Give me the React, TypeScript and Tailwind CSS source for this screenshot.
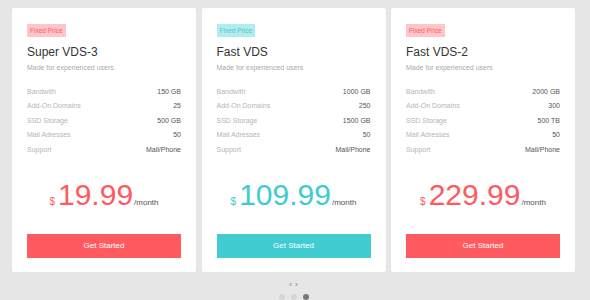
import * as React from "react";

type Plan = {
  name: string;
  color: "red" | "teal";
  specs: [string, string][];
  price: string;
};

const plans: Plan[] = [
  {
    name: "Super VDS-3",
    color: "red",
    specs: [
      ["Bandwith", "150 GB"],
      ["Add-On Domains", "25"],
      ["SSD Storage", "500 GB"],
      ["Mail Adresses", "50"],
      ["Support", "Mail/Phone"],
    ],
    price: "19.99",
  },
  {
    name: "Fast VDS",
    color: "teal",
    specs: [
      ["Bandwith", "1000 GB"],
      ["Add-On Domains", "250"],
      ["SSD Storage", "1500 GB"],
      ["Mail Adresses", "50"],
      ["Support", "Mail/Phone"],
    ],
    price: "109.99",
  },
  {
    name: "Fast VDS-2",
    color: "red",
    specs: [
      ["Bandwith", "2000 GB"],
      ["Add-On Domains", "300"],
      ["SSD Storage", "500 TB"],
      ["Mail Adresses", "50"],
      ["Support", "Mail/Phone"],
    ],
    price: "229.99",
  },
];

const colorStyles = {
  red: {
    badge: "bg-[#ffc5c8] text-[#ff5a5f]",
    text: "text-[#ff5a5f]",
    button: "bg-[#ff5a5f]",
  },
  teal: {
    badge: "bg-[#b3ecee] text-[#3fcbd0]",
    text: "text-[#3fcbd0]",
    button: "bg-[#40ccd1]",
  },
};

function PlanCard({ plan }: { plan: Plan }) {
  const c = colorStyles[plan.color];
  return (
    <div className="flex h-[264px] w-[184px] flex-col rounded-[2px] bg-white px-[15px] pt-[16px]">
      <div className="flex">
        <span className={`h-[13px] px-[3px] text-[6.5px] leading-[13px] ${c.badge}`}>
          Fixed Price
        </span>
      </div>
      <h2 className="mt-[8px] text-[12px] leading-[14px] text-[#333]">
        {plan.name}
      </h2>
      <p className="mt-[4px] text-[7px] leading-[10px] text-[#aaa]">
        Made for experienced users
      </p>
      <div className="mt-[12px]">
        {plan.specs.map(([label, value]) => (
          <div
            key={label}
            className="flex h-[14.4px] items-center justify-between text-[7px]"
          >
            <span className="text-[#b5b5b5]">{label}</span>
            <span className="text-[#555]">{value}</span>
          </div>
        ))}
      </div>
      <div className="mt-[23px] flex items-baseline justify-center">
        <span className={`mr-[3px] text-[10px] leading-none ${c.text}`}>$</span>
        <span className={`text-[30px] leading-[30px] ${c.text}`}>
          {plan.price}
        </span>
        <span className="ml-[1px] text-[8px] leading-none text-[#555]">
          /month
        </span>
      </div>
      <button
        className={`mt-[24px] h-[24px] w-full text-[8px] text-white ${c.button}`}
      >
        Get Started
      </button>
    </div>
  );
}

export default function App() {
  return (
    <div className="h-[300px] w-[590px] overflow-hidden bg-[#e6e6e6] font-['Liberation_Sans',Arial,sans-serif]">
      <div className="ml-[12px] flex w-[563px] flex-col items-center pt-[8px]">
        <div className="flex gap-[5.5px]">
          {plans.map((p) => (
            <PlanCard key={p.name} plan={p} />
          ))}
        </div>
        <div className="mt-[9px] flex gap-[3px] text-[8px] leading-[8px] text-[#777]">
          <span>‹</span>
          <span>›</span>
        </div>
        <div className="mt-[5px] flex gap-[6px]">
          <span className="h-[6px] w-[6px] rounded-full bg-[#d5d5d5]" />
          <span className="h-[6px] w-[6px] rounded-full bg-[#d5d5d5]" />
          <span className="h-[6px] w-[6px] rounded-full bg-[#777]" />
        </div>
      </div>
    </div>
  );
}
